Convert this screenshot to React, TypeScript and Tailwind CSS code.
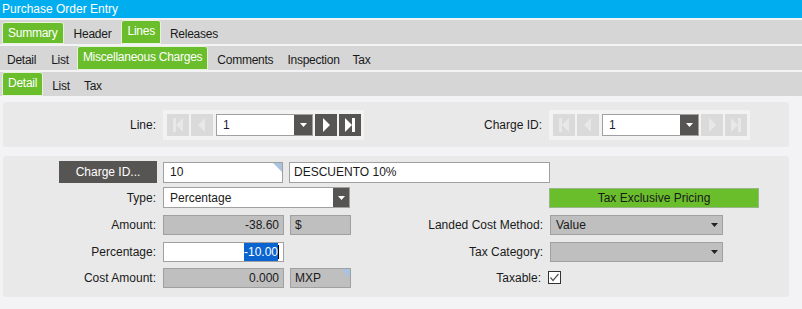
import React from "react";

const font = { fontFamily: '"Liberation Sans", Arial, sans-serif' };

const GreenTab = ({ label, tall }: { label: string; tall?: boolean }) => (
  <div
    className={`flex items-center px-[5px] bg-[#6abd2b] text-white border border-[#e6f2dc] rounded-t-[3px] ${
      tall ? "h-[24px] self-end pb-[3px]" : "h-[22px] self-end"
    }`}
  >
    {label}
  </div>
);

const TabRow = ({ children }: { children: React.ReactNode }) => (
  <div className="h-[24px] bg-[#d6d6d6] flex items-end text-[12px] tracking-[-0.25px] text-[#1a1a1a] mt-[2px]">
    {children}
  </div>
);

const PlainTab = ({ label, className = "" }: { label: string; className?: string }) => (
  <div className={`h-[22px] flex items-center pt-[2px] ${className}`}>{label}</div>
);

const NavBtn = ({ kind, enabled }: { kind: "first" | "prev" | "next" | "last"; enabled: boolean }) => {
  const fill = enabled ? "#ffffff" : "#e8e8e8";
  return (
    <div
      className={`w-[22px] h-[22px] flex items-center justify-center ${
        enabled ? "bg-[#575553]" : "bg-[#dadada]"
      }`}
    >
      <svg width="14" height="16" viewBox="0 0 14 16">
        {kind === "first" && (
          <>
            <rect x="2" y="1" width="3" height="14" fill={fill} />
            <polygon points="12,1 12,15 5,8" fill={fill} />
          </>
        )}
        {kind === "prev" && <polygon points="10,1 10,15 3,8" fill={fill} />}
        {kind === "next" && <polygon points="4,1 4,15 11,8" fill={fill} />}
        {kind === "last" && (
          <>
            <polygon points="2,1 2,15 9,8" fill={fill} />
            <rect x="9" y="1" width="3" height="14" fill={fill} />
          </>
        )}
      </svg>
    </div>
  );
};

const Caret = () => (
  <svg width="7" height="4" viewBox="0 0 7 4">
    <polygon points="0,0 7,0 3.5,4" fill="#ffffff" />
  </svg>
);

const DarkCaret = () => (
  <svg width="7" height="4" viewBox="0 0 7 4">
    <polygon points="0,0 7,0 3.5,4" fill="#222222" />
  </svg>
);

const Navigator = ({ prevEnabled, nextEnabled }: { prevEnabled: boolean; nextEnabled: boolean }) => (
  <div className="w-[201px] h-[30px] bg-[#f2f2f2] flex items-center pl-[4px] gap-[2px]">
    <NavBtn kind="first" enabled={prevEnabled} />
    <NavBtn kind="prev" enabled={prevEnabled} />
    <div className="ml-[1px] w-[97px] h-[22px] bg-white border border-[#a0a0a0] flex items-center">
      <span className="flex-1 pl-[6px] text-[12px] text-[#1a1a3a]">1</span>
      <div className="w-[18px] h-full bg-[#575553] flex items-center justify-center">
        <Caret />
      </div>
    </div>
    <NavBtn kind="next" enabled={nextEnabled} />
    <NavBtn kind="last" enabled={nextEnabled} />
  </div>
);

const Corner = () => (
  <div className="absolute top-0 right-0 w-0 h-0 border-t-[9px] border-l-[9px] border-t-[#a8c2e0] border-l-transparent" />
);

const Label = ({ text, w }: { text: string; w: string }) => (
  <div className={`${w} text-right pr-[7px] text-[12px] text-[#1a1a1a]`}>{text}</div>
);

export default function App() {
  return (
    <div className="w-[802px] h-[309px] bg-[#f3f3f5] overflow-hidden" style={font}>
      <div className="h-[18px] bg-[#00aeef] text-white text-[12px] leading-[18px] pl-[2px]">
        Purchase Order Entry
      </div>

      <TabRow>
        <div className="ml-[2px]">
          <GreenTab label="Summary" />
        </div>
        <PlainTab label="Header" className="ml-[10px]" />
        <div className="ml-[10px]">
          <GreenTab label="Lines" tall />
        </div>
        <PlainTab label="Releases" className="ml-[9px]" />
      </TabRow>

      <TabRow>
        <PlainTab label="Detail" className="ml-[7px]" />
        <PlainTab label="List" className="ml-[15px]" />
        <div className="ml-[8px]">
          <GreenTab label="Miscellaneous Charges" tall />
        </div>
        <PlainTab label="Comments" className="ml-[9px]" />
        <PlainTab label="Inspection" className="ml-[14px]" />
        <PlainTab label="Tax" className="ml-[13px]" />
      </TabRow>

      <TabRow>
        <div className="ml-[2px]">
          <GreenTab label="Detail" tall />
        </div>
        <PlainTab label="List" className="ml-[9px]" />
        <PlainTab label="Tax" className="ml-[14px]" />
      </TabRow>

      <div className="px-[3px] pt-[6px] w-[792px]">
        <div className="h-[45px] bg-[#e9e9e9] rounded-[3px] flex items-center">
          <Label text="Line:" w="w-[160px]" />
          <Navigator prevEnabled={false} nextEnabled={true} />
          <Label text="Charge ID:" w="w-[185px]" />
          <Navigator prevEnabled={false} nextEnabled={false} />
        </div>

        <div className="mt-[9px] h-[141px] bg-[#e9e9e9] rounded-[3px] pt-[5px] text-[12px] text-[#1a1a1a]">
          <div className="flex items-center h-[22px]">
            <div className="ml-[56px] w-[98px] h-[22px] bg-[#575553] text-white flex items-center justify-center">
              Charge ID...
            </div>
            <div className="relative ml-[6px] w-[120px] h-[21px] bg-white border border-[#a0a0a0] flex items-center pl-[6px]">
              10
              <Corner />
            </div>
            <div className="ml-[6px] w-[261px] h-[21px] bg-white border border-[#a0a0a0] flex items-center pl-[4px]">
              DESCUENTO 10%
            </div>
          </div>

          <div className="flex items-center h-[21px] mt-[4px]">
            <Label text="Type:" w="w-[160px]" />
            <div className="w-[187px] h-[21px] bg-white border border-[#a0a0a0] flex items-center">
              <span className="flex-1 pl-[6px]">Percentage</span>
              <div className="w-[16px] h-full bg-[#575553] flex items-center justify-center">
                <Caret />
              </div>
            </div>
            <div className="ml-[199px] w-[210px] h-[20px] bg-[#6abd2b] border border-[#9bb58a] flex items-center justify-center text-[#1a1a1a]">
              Tax Exclusive Pricing
            </div>
          </div>

          <div className="flex items-center h-[21px] mt-[6px]">
            <Label text="Amount:" w="w-[160px]" />
            <div className="w-[121px] h-[20px] bg-[#bfbfbf] border border-[#a0a0a0] flex items-center justify-end pr-[4px]">
              -38.60
            </div>
            <div className="ml-[6px] w-[61px] h-[20px] bg-[#bfbfbf] border border-[#a0a0a0] flex items-center pl-[4px]">
              $
            </div>
            <Label text="Landed Cost Method:" w="w-[199px]" />
            <div className="w-[173px] h-[20px] bg-[#bfbfbf] border border-[#a0a0a0] flex items-center">
              <span className="flex-1 pl-[5px]">Value</span>
              <div className="w-[16px] flex items-center justify-center">
                <DarkCaret />
              </div>
            </div>
          </div>

          <div className="flex items-center h-[21px] mt-[6px]">
            <Label text="Percentage:" w="w-[160px]" />
            <div className="w-[121px] h-[20px] bg-white border border-[#a0a0a0] flex items-center justify-end pr-[4px]">
              <span className="bg-[#0a64d0] text-white">-10.00</span>
              <span className="w-[1px] h-[14px] bg-black" />
            </div>
            <Label text="Tax Category:" w="w-[266px]" />
            <div className="w-[173px] h-[20px] bg-[#bfbfbf] border border-[#a0a0a0] flex items-center justify-end">
              <div className="w-[16px] flex items-center justify-center">
                <DarkCaret />
              </div>
            </div>
          </div>

          <div className="flex items-center h-[21px] mt-[5px]">
            <Label text="Cost Amount:" w="w-[160px]" />
            <div className="w-[121px] h-[20px] bg-[#bfbfbf] border border-[#a0a0a0] flex items-center justify-end pr-[4px]">
              0.000
            </div>
            <div className="relative ml-[6px] w-[61px] h-[20px] bg-[#bfbfbf] border border-[#a0a0a0] flex items-center pl-[4px]">
              MXP
              <Corner />
            </div>
            <Label text="Taxable:" w="w-[197px]" />
            <div className="w-[13px] h-[13px] bg-white border border-[#333333] flex items-center justify-center">
              <svg width="11" height="11" viewBox="0 0 11 11">
                <polyline points="1.5,5.5 4,8.5 9.5,2" fill="none" stroke="#555555" strokeWidth="1.2" />
              </svg>
            </div>
          </div>
        </div>
      </div>
    </div>
  );
}
